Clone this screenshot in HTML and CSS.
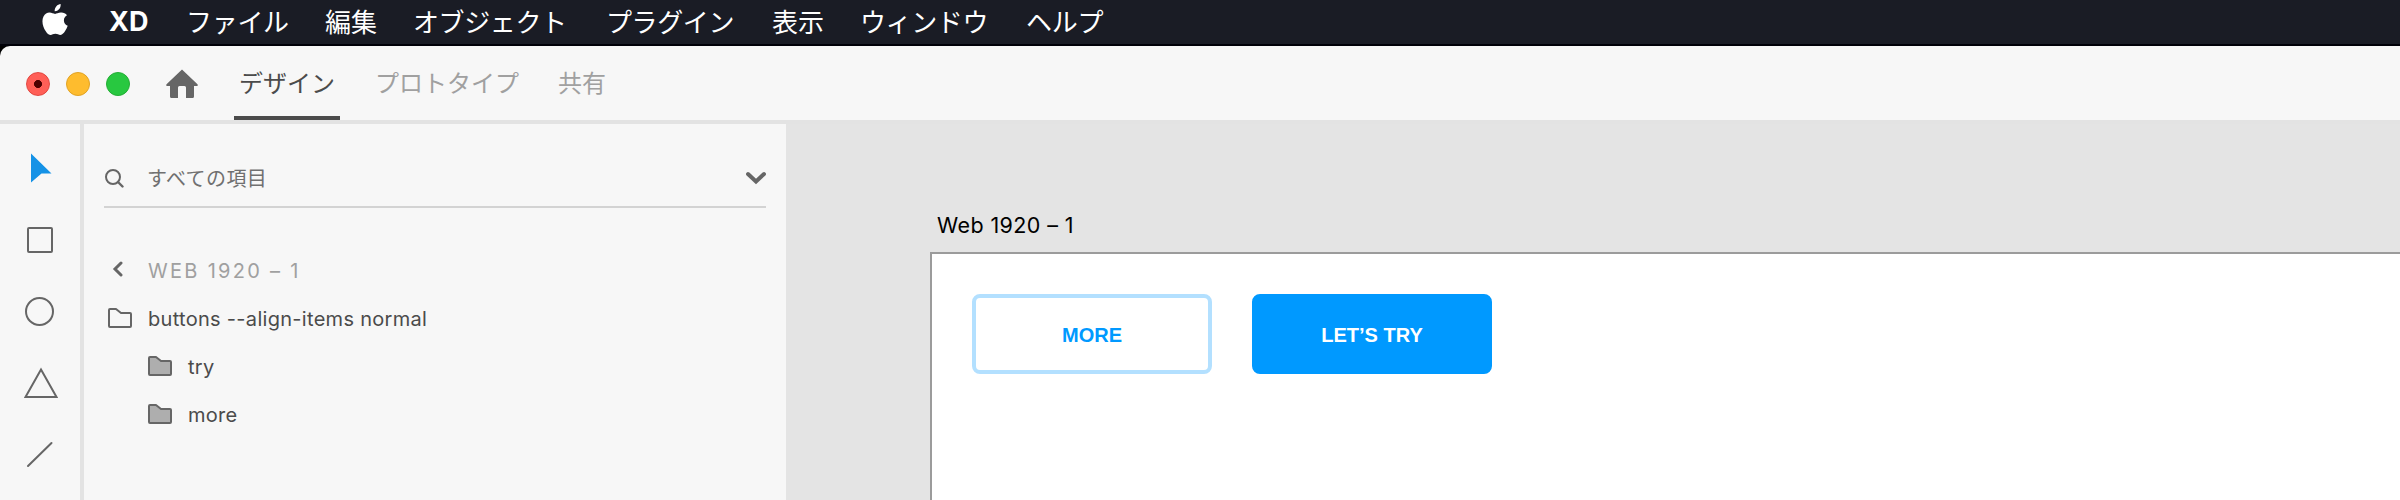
FILE: index.html
```html
<!DOCTYPE html>
<html lang="ja">
<head>
<meta charset="utf-8">
<title>XD</title>
<link rel="stylesheet" href="styles.css">
</head>
<body>
<nav class="menubar">
  <svg class="apple" width="26" height="34" viewBox="0 0 26 34"><path fill="#fff" d="M18.6 1c.3 2.100-.5 3.900-1.600 5.200-1.100 1.300-2.700 2.100-4.300 2-.2-1.900.6-3.800 1.700-5C15.500 2 17.200 1.100 18.600 1zM25 12.300c-2 1.200-3.100 3-3.100 5.100 0 2.500 1.500 4.500 3.800 5.400-.6 1.900-1.500 3.700-2.600 5.300-1.300 1.900-2.600 3.800-4.700 3.800-2 0-2.600-1.200-5-1.200-2.300 0-3.100 1.200-5 1.200-2 .1-3.500-2-4.800-3.900C1 24.300-.8 17.700 1.500 13.500c1.300-2.400 3.700-3.900 6-3.900 2.200 0 3.900 1.300 5.600 1.300 1.400 0 3.500-1.500 6.300-1.300 2.200.1 4.300 1 5.600 2.700z"/></svg>
  <span class="menu app">XD</span>
  <span class="menu file">ファイル</span>
  <span class="menu edit">編集</span>
  <span class="menu object">オブジェクト</span>
  <span class="menu plugin">プラグイン</span>
  <span class="menu view">表示</span>
  <span class="menu win">ウィンドウ</span>
  <span class="menu help">ヘルプ</span>
</nav>
<div class="window">
  <header class="titlebar">
    <div class="lights"><i class="light red"></i><i class="light yellow"></i><i class="light green"></i></div>
    <svg class="home" width="32" height="30" viewBox="0 0 32 30"><path fill="#666" d="M16 .5 31.500 15.200Q32.300 17 30.500 17H28V27.500Q28 29 26.500 29H20V18.500Q20 17 18.500 17H13.500Q12 17 12 18.500V29H5.500Q4 29 4 27.500V17H1.500Q-.3 17 .5 15.200Z"/></svg>
    <div class="tab active">デザイン</div>
    <div class="tab proto">プロトタイプ</div>
    <div class="tab share">共有</div>
  </header>
  <main class="workspace">
    <aside class="tools">
      <svg width="80" height="376" viewBox="0 0 80 376" fill="none" stroke="#666" stroke-width="2">
        <path fill="#1592e6" stroke="none" d="M31 29.500 51.500 49.500H41.500L31 58.500Z"/>
        <rect x="28" y="104" width="24" height="24" rx="1"/>
        <circle cx="39.500" cy="187.500" r="13.500"/>
        <path d="M41 245.500 56.500 273H25.500Z"/>
        <path stroke-linecap="round" d="M28 342 51.500 319"/>
      </svg>
    </aside>
    <section class="panel">
      <div class="search">
        <svg class="glass" width="20" height="20" viewBox="0 0 20 20" fill="none" stroke="#666" stroke-width="2"><circle cx="9" cy="9" r="7"/><path stroke-width="2.400" stroke-linecap="round" d="m14 14 4.500 4.500"/></svg>
        <span class="query">すべての項目</span>
        <svg class="chevron" width="20" height="14" viewBox="0 0 20 14" fill="none" stroke="#666" stroke-width="4" stroke-linecap="round"><path d="m2 3 8 7.500L18 3"/></svg>
      </div>
      <div class="row crumb">
        <svg class="back" width="12" height="16" viewBox="0 0 12 16" fill="none" stroke="#666" stroke-width="3" stroke-linecap="round"><path d="M9 2 3 8l6 6"/></svg>
        <span class="crumbtext">WEB 1920 – 1</span>
      </div>
      <div class="row">
        <svg class="folder" width="24" height="20" viewBox="0 0 24 20" fill="none" stroke="#666" stroke-width="2" stroke-linejoin="round"><path d="M1 2Q1 1 2 1H8L13 5H22Q23 5 23 6V18Q23 19 22 19H2Q1 19 1 18Z"/></svg>
        <span class="label group">buttons --align-items normal</span>
      </div>
      <div class="row nested">
        <svg class="folder" width="24" height="20" viewBox="0 0 24 20" fill="#aeaeae" stroke="#666" stroke-width="2" stroke-linejoin="round"><path d="M1 2Q1 1 2 1H8L13 5H22Q23 5 23 6V18Q23 19 22 19H2Q1 19 1 18Z"/></svg>
        <span class="label">try</span>
      </div>
      <div class="row nested">
        <svg class="folder" width="24" height="20" viewBox="0 0 24 20" fill="#aeaeae" stroke="#666" stroke-width="2" stroke-linejoin="round"><path d="M1 2Q1 1 2 1H8L13 5H22Q23 5 23 6V18Q23 19 22 19H2Q1 19 1 18Z"/></svg>
        <span class="label">more</span>
      </div>
    </section>
    <section class="canvas">
      <div class="artname">Web 1920 – 1</div>
      <div class="artboard">
        <div class="button outline">MORE</div>
        <div class="button solid">LET’S TRY</div>
      </div>
    </section>
  </main>
</div>
</body>
</html>
```
FILE: styles.css
```css
* { box-sizing: border-box; }
body {
  margin: 0;
  width: 2400px;
  height: 500px;
  overflow: hidden;
  background: #000;
  font-family: Inter, "Noto Sans CJK JP", sans-serif;
  white-space: nowrap;
}
svg { display: block; flex: none; }

.menubar {
  display: flex;
  height: 46px;
  background: #1a1c25;
  border-bottom: 2px solid #000008;
  color: #fff;
}
.apple { margin: 3px 0 0 42px; }
.menu {
  flex: none;
  height: 44px;
  font: 400 26px/42px "Noto Sans CJK JP", sans-serif;
}
.app { width: 77px; margin-left: 41px; font: 700 27px/44px Inter, sans-serif; }
.file { width: 139px; letter-spacing: -0.3px; }
.edit { width: 88px; }
.object { width: 193px; letter-spacing: -0.4px; }
.plugin { width: 166px; letter-spacing: -0.4px; }
.view { width: 88px; }
.win { width: 166px; letter-spacing: -0.4px; }
.help { letter-spacing: -0.2px; }

.window {
  height: 454px;
  background: #f7f7f7;
  border-top-left-radius: 10px;
  overflow: hidden;
}
.titlebar {
  display: flex;
  height: 78px;
  border-bottom: 4px solid #e3e3e3;
}
.lights { display: flex; gap: 16px; margin: 26px 0 0 26px; }
.light { width: 24px; height: 24px; border-radius: 50%; border: 1px solid; }
.red { background: radial-gradient(circle, #4d0000 0 3.7px, #ff5f57 4.3px); border-color: #e2463f; }
.yellow { background: #febc2e; border-color: #e1a325; }
.green { background: #28c840; border-color: #24ae35; }
.home { margin: 23px 0 0 36px; }
.tab {
  flex: none;
  height: 74px;
  font: 400 24px/72px "Noto Sans CJK JP", sans-serif;
  color: #a0a0a0;
}
.active {
  width: 106px;
  margin-left: 36px;
  padding-left: 5px;
  border-bottom: 4px solid #4b4b4b;
  color: #4b4b4b;
}
.proto { width: 183px; margin-left: 35px; }

.workspace { display: flex; height: 376px; }
.tools { flex: none; width: 84px; border-right: 4px solid #e3e3e3; }
.panel { flex: none; width: 702px; padding: 0 20px; }
.search {
  display: flex;
  align-items: center;
  height: 84px;
  padding-top: 26px;
  border-bottom: 2px solid #d3d3d3;
}
.query {
  flex: 1;
  margin-left: 23px;
  font: 400 20px/30px "Noto Sans CJK JP", sans-serif;
  letter-spacing: 0.4px;
  color: #707070;
}
.row { display: flex; align-items: center; height: 48px; padding-left: 4px; }
.crumb { margin-top: 39px; padding-left: 8px; }
.back { margin-bottom: 4px; }
.crumbtext { margin-left: 24px; font-size: 20px; letter-spacing: 2.3px; color: #a0a0a0; }
.folder { margin-bottom: 2px; }
.label { margin-left: 16px; font-size: 20px; letter-spacing: 0.3px; color: #4b4b4b; }
.nested { padding-left: 44px; }

.canvas { flex: 1; padding-left: 144px; background: #e4e4e4; overflow: hidden; }
.artname { height: 128px; padding: 86px 0 0 7px; font-size: 21.5px; line-height: 30px; letter-spacing: 0.4px; color: #000; }
.artboard {
  display: flex;
  gap: 40px;
  height: 260px;
  padding: 40px;
  border: solid #9b9b9b;
  border-width: 2px 0 0 2px;
  background: #fff;
}
.button {
  flex: none;
  width: 240px;
  height: 80px;
  border: 4px solid #b3e0ff;
  border-radius: 8px;
  font: 700 20px/74px "Liberation Sans", Arial, sans-serif;
  text-align: center;
  color: #0099ff;
}
.solid { background: #0099ff; border-color: #0099ff; color: #fff; }
```
